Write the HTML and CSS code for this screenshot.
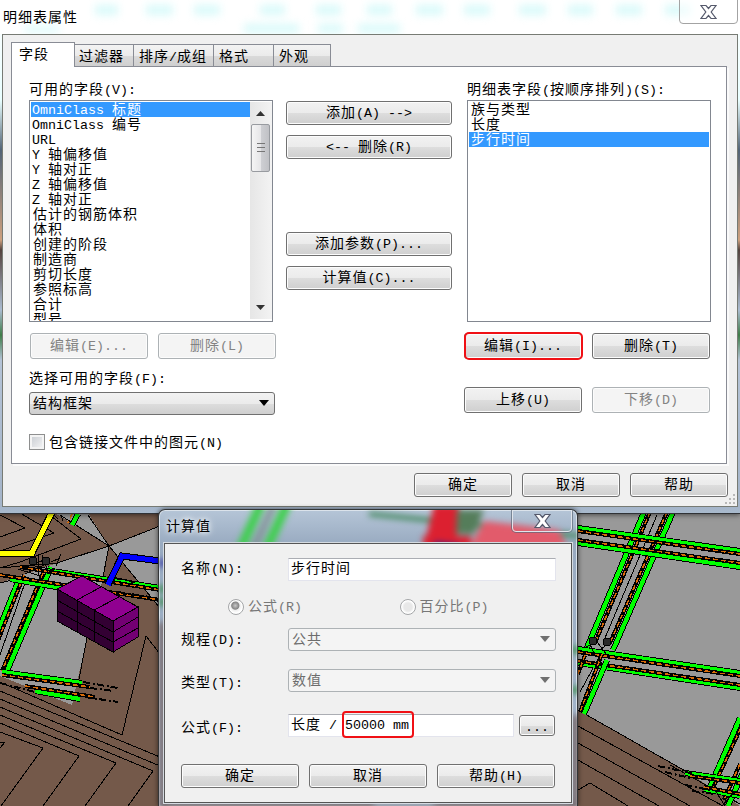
FILE: index.html
```html
<!DOCTYPE html>
<html lang="zh-CN">
<head>
<meta charset="utf-8">
<title>明细表属性</title>
<link rel="stylesheet" href="styles.css">
</head>
<body>
<div class="desktop">
<svg class="model" viewBox="0 0 740 806" width="740" height="806">
  <rect width="740" height="806" fill="#74594a"/>
  <g fill="#999">
    <path d="M578 500H740V806L687 772L583 713L578 710Z"/>
    <path d="M55 513H88L109 546Z"/>
    <path d="M109 546L160 526V608Z"/>
    <path d="M109 546L102 582L87 638L72 705L0 676V583L57 563Z"/>
  </g>
  <g class="thin">
    <path d="M60 515L109 546L160 526M88 515L109 546L102 582M109 546L160 608M109 546L57 563L0 568M87 638L78 684M0 583L24 577"/>
    <path d="M0 515L25 528L0 537M20 513L54 533L0 551M47 513L81 539L20 562L0 568"/>
    <path d="M160 654L146 636L122 735L0 682M0 691L160 757M0 699L160 766M0 707L153 771L128 806M0 715L116 763L85 806M0 723L79 756L43 806M0 732L43 748L1 806M0 742L5 742L0 748"/>
    <path d="M578 710L687 772M578 726L723 806M578 743L690 806M578 760L659 806M578 790L590 783L628 806M670 765L740 804"/>
    <path d="M27 577L0 655M657 515L605 638M603 650L580 692"/>
  </g>
  <!-- left beams -->
  <g>
    <path class="e" d="M20 577L-3 634"/><path class="g" d="M20 577L-3 634"/><path class="k" d="M24 575L-3 643"/><path class="o" d="M24 575L-3 643"/>
    <path class="e" d="M51 567L7 671"/><path class="g" d="M51 567L7 671"/><path class="k" d="M43 573L2 671"/><path class="o" d="M43 573L2 671"/>
    <path class="e" d="M52 571L160 588"/><path class="g" d="M52 571L160 588"/><path class="k" d="M20 567L160 590"/><path class="o" d="M20 567L160 590"/>
    <path class="e" d="M10 579L62 588"/><path class="g" d="M10 579L62 588"/><path class="k" d="M0 575L160 600"/><path class="o" d="M0 575L160 600"/>
    <path class="e" d="M2 672L82 683"/><path class="g" d="M2 672L82 683"/><path class="k" d="M2 675L90 687"/><path class="o" d="M2 675L90 687"/>
    <path class="e" d="M35 691L80 699"/><path class="g" d="M35 691L80 699"/><path class="k" d="M25 686L95 697"/><path class="o" d="M25 686L95 697"/>
    <path class="dash" d="M83 682L118 688M90 688L114 691M85 697L118 702M0 683L35 692M115 578L138 583M118 592L150 597"/>
    <path class="e" d="M78 514L72 525"/><path class="g" d="M78 514L72 525"/><path class="o" d="M72 514L68 523"/>
    <g class="thin"><path d="M22 568L47 559M25 574L48 563M30 565L55 570M38 554V575M42 555L48 572M56 566L61 554M51 562L60 558M18 569L40 576M53 514L58 519M61 515L63 521"/></g>
    <g class="node"><circle cx="33" cy="561" r="4"/><circle cx="46" cy="561" r="4"/></g>
  </g>
  <path class="ye" d="M0 553H32L52 512"/><path class="y" d="M0 553H32L52 512"/>
  <path class="be" d="M108 585L122 556L160 561"/><path class="b" d="M108 585L122 556L160 561"/>
  <!-- stacked block -->
  <g stroke="#000" stroke-width="1">
    <path fill="#900090" d="M57 589L82 576L138 607L113 621Z"/>
    <path fill="#330033" d="M57 589L113 621V652L57 621Z"/>
    <path fill="#730073" d="M113 621L138 607V637L113 652Z"/>
    <path fill="none" d="M57 600L113 632L138 617M57 611L113 642L138 628M77 600V632M94 610V642M77 600L101 587M94 610L119 597"/>
  </g>
  <!-- right beams -->
  <g>
    <path class="e" d="M644 512L586 650"/><path class="g" d="M644 512L586 650"/><path class="k" d="M650 512L595 643"/><path class="o" d="M650 512L595 643"/>
    <path class="e" d="M673 512L613 650"/><path class="g" d="M673 512L613 650"/><path class="k" d="M667 512L610 643"/><path class="o" d="M667 512L610 643"/>
    <path class="e" d="M578 528L740 551"/><path class="g" d="M578 528L740 551"/><path class="k" d="M578 531L740 554"/><path class="o" d="M578 531L740 554"/>
    <path class="e" d="M578 543L740 567"/><path class="g" d="M578 543L740 567"/><path class="k" d="M578 540L740 563"/><path class="o" d="M578 540L740 563"/>
    <path class="e" d="M578 649L740 673"/><path class="g" d="M578 649L740 673"/><path class="k" d="M578 652L740 676"/><path class="o" d="M578 652L740 676"/>
    <path class="e" d="M578 663L740 688"/><path class="g" d="M578 663L740 688"/><path class="k" d="M578 661L740 685"/><path class="o" d="M578 661L740 685"/>
    <path class="e" d="M607 660L584 714"/><path class="g" d="M607 660L584 714"/><path class="k" d="M602 654L580 712"/><path class="o" d="M602 654L580 712"/>
    <path class="k" d="M585 655L578 674"/><path class="o" d="M585 655L578 674"/>
    <path class="e" d="M740 718L710 787"/><path class="g" d="M740 718L710 787"/><path class="k" d="M744 721L713 788"/><path class="o" d="M744 721L713 788"/>
    <path class="e" d="M745 768L728 806"/><path class="g" d="M745 768L728 806"/><path class="k" d="M740 764L724 800"/><path class="o" d="M740 764L724 800"/>
    <path class="e" d="M685 773L740 781"/><path class="g" d="M685 773L740 781"/><path class="k" d="M690 776L740 783"/><path class="o" d="M690 776L740 783"/>
    <path class="e" d="M704 789L740 796"/><path class="g" d="M704 789L740 796"/><path class="k" d="M704 787L740 794"/><path class="o" d="M704 787L740 794"/>
    <path class="dash" d="M658 766L695 774M665 772L690 778M685 785L710 790M692 791L715 794"/>
    <g class="thin"><path d="M584 648L598 641M589 642L595 655M597 642L607 655M600 650L612 641M715 790L725 806M722 806L735 791"/></g>
    <g class="node"><circle cx="593" cy="641" r="4"/><circle cx="607" cy="642" r="4"/></g>
  </g>
</svg>

<section class="window main">
  <header class="caption">
    <svg class="haze" viewBox="0 0 740 34" width="740" height="34"><g fill="#d9fafa">
      <path d="M95 5h23v10H95zM146 5h27v10h-27zM194 5h26v10h-26zM260 5h25v10h-25zM316 5h25v10h-25zM367 5h25v10h-25zM416 5h27v10h-27zM464 5h26v10h-26zM519 5h27v10h-27zM568 5h25v10h-25zM616 5h26v10h-26zM665 5h25v10h-25zM244 24h55v9h-55zM318 24h25v9h-25zM358 24h42v9h-42zM25 26h34v6H25z"/></g></svg>
    <span>明细表属性</span>
    <div class="close"><svg width="17" height="16" viewBox="0 0 17 16"><path d="M1 1.5H6L8.5 4.5L11 1.5H16L11.2 8L16 14.5H11L8.5 11.5L6 14.5H1L5.8 8Z"/></svg></div>
  </header>
  <div class="client">
    <nav class="tabs">
      <div class="tab on">字段</div><div class="tab t2">过滤器</div><div class="tab t3">排序<i>/</i>成组</div><div class="tab t4">格式</div><div class="tab t5">外观</div>
    </nav>
    <div class="page">
      <div class="left">
        <div class="lab">可用的字段<i>(V):</i></div>
        <div class="list">
          <ul>
            <li class="sel"><i>OmniClass </i>标题</li><li><i>OmniClass </i>编号</li><li><i>URL</i></li>
            <li><i>Y </i>轴偏移值</li><li><i>Y </i>轴对正</li><li><i>Z </i>轴偏移值</li><li><i>Z </i>轴对正</li>
            <li>估计的钢筋体积</li><li>体积</li><li>创建的阶段</li><li>制造商</li><li>剪切长度</li><li>参照标高</li><li>合计</li><li>型号</li>
          </ul>
          <div class="scroll">
            <svg width="9" height="5" viewBox="0 0 9 5"><path d="M0 5L4.500 0L9 5Z"/></svg>
            <div class="thumb"></div>
            <svg class="down" width="9" height="5" viewBox="0 0 9 5"><path d="M0 0L4.500 5L9 0Z"/></svg>
          </div>
        </div>
        <div class="pair"><div class="btn off">编辑<i>(E)...</i></div><div class="btn off">删除<i>(L)</i></div></div>
        <div class="lab lab2">选择可用的字段<i>(F):</i></div>
        <div class="combo">结构框架<svg width="10" height="6" viewBox="0 0 10 6"><path d="M0 0H10L5 6Z"/></svg></div>
        <div class="check"><b></b>包含链接文件中的图元<i>(N)</i></div>
      </div>
      <div class="mid">
        <div class="btn">添加<i>(A) --&gt;</i></div><div class="btn"><i>&lt;-- </i>删除<i>(R)</i></div>
        <div class="btn gap">添加参数<i>(P)...</i></div><div class="btn">计算值<i>(C)...</i></div>
      </div>
      <div class="right">
        <div class="lab">明细表字段<i>(</i>按顺序排列<i>)(S):</i></div>
        <div class="list"><ul><li>族与类型</li><li>长度</li><li class="sel">步行时间</li></ul></div>
        <div class="pair"><div class="btn marked">编辑<i>(I)...</i></div><div class="btn">删除<i>(T)</i></div></div>
        <div class="pair move"><div class="btn">上移<i>(U)</i></div><div class="btn off">下移<i>(D)</i></div></div>
      </div>
    </div>
    <footer class="actions"><div class="btn">确定</div><div class="btn">取消</div><div class="btn">帮助</div></footer>
    <svg class="grip" width="12" height="12" viewBox="0 0 12 12"><path d="M9 1h2v2H9zM5 5h2v2H5zM9 5h2v2H9zM1 9h2v2H1zM5 9h2v2H5zM9 9h2v2H9z"/></svg>
  </div>
</section>

<section class="window calc">
  <svg class="glass" viewBox="0 0 420 297" width="420" height="297">
    <g class="blur">
      <path d="M103 -8L80 42M129 -8L106 42" stroke="#3ecf4d" stroke-width="9"/><path d="M116 -8L93 42" stroke="#7b8c8c" stroke-width="5"/>
      <path d="M210 4L290 12L420 26" stroke="#34804d" stroke-width="4"/>
      <path d="M275 -5H300L297 40H264Z" fill="#dc2030"/><path d="M298 0H325L315 24H297Z" fill="#557d5a"/><path d="M264 26L312 26V38H264Z" fill="#dc2030"/>
      <path d="M325 11L400 20L410 42H308Z" fill="#e25b6b"/><path d="M275 34L300 37" stroke="#43208a" stroke-width="5"/>
      <path d="M0 53H8" stroke="#383aa5" stroke-width="7"/><path d="M0 79H8M0 92H8M412 140H420M412 180H420" stroke="#398b49" stroke-width="7"/>
      <path d="M0 112H8V297H0ZM412 205H420V297H412ZM0 292H420V300H0Z" fill="#786b6e"/><path d="M215 293H275" stroke="#a8bbce" stroke-width="6"/>
    </g>
  </svg>
  <header class="caption"><span>计算值</span>
    <div class="close"><svg width="17" height="16" viewBox="0 0 17 16"><path d="M1 1.5H6L8.500 4.500L11 1.500H16L11.200 8L16 14.500H11L8.500 11.500L6 14.500H1L5.800 8Z"/></svg></div>
  </header>
  <div class="client">
    <div class="row r1"><label>名称<i>(N):</i></label><div class="input">步行时间</div></div>
    <div class="radios"><div><b class="dot"></b>公式<i>(R)</i></div><div><b></b>百分比<i>(P)</i></div></div>
    <div class="row r2"><label>规程<i>(D):</i></label><div class="combo off">公共<svg width="10" height="6" viewBox="0 0 10 6"><path d="M0 0H10L5 6Z"/></svg></div></div>
    <div class="row r3"><label>类型<i>(T):</i></label><div class="combo off">数值<svg width="10" height="6" viewBox="0 0 10 6"><path d="M0 0H10L5 6Z"/></svg></div></div>
    <div class="row r4"><label>公式<i>(F):</i></label><div class="input short">长度<i> / </i><span class="hot"><i>50000 mm</i></span></div><div class="btn more"><i>...</i></div></div>
    <footer class="actions"><div class="btn">确定</div><div class="btn">取消</div><div class="btn">帮助<i>(H)</i></div></footer>
  </div>
</section>
</div>
</body>
</html>
```
FILE: styles.css
```css
* { box-sizing: border-box; }
body { margin: 0; font: 14px/15px "Noto Sans CJK SC", sans-serif; letter-spacing: 1px; color: #000; }
i { font: 13.33px/1px "Liberation Mono", monospace; letter-spacing: 0; white-space: pre; }
ul { margin: 0; padding: 0; list-style: none; }
svg { display: block; flex: none; }
.desktop { position: relative; width: 740px; height: 806px; overflow: hidden; }
.model { position: absolute; inset: 0; shape-rendering: crispEdges; }
.thin path { fill: none; stroke: #000; stroke-width: 1; }
.e, .g, .k, .o, .y, .ye, .b, .be, .dash { fill: none; }
.e { stroke: #000; stroke-width: 6; }
.g { stroke: #0f0; stroke-width: 4.2; }
.k { stroke: #000; stroke-width: 4; }
.o { stroke: #d96b08; stroke-width: 1.5; stroke-dasharray: 5 3; }
.dash { stroke: #000; stroke-width: 2; stroke-dasharray: 7 3 2 2; }
.ye { stroke: #000; stroke-width: 7; }
.y { stroke: #ff0; stroke-width: 5; }
.be { stroke: #000; stroke-width: 7; }
.b { stroke: #00f; stroke-width: 5; }
.node { fill: #2a2a2a; stroke: #000; }

.window { position: absolute; }
.main {
  left: 0; top: 0; width: 740px; height: 514px; padding: 0 2px 7px;
  background: linear-gradient(#fff 0, #e9ffff 100px, #526477 150px, #cda07e 240px, #54433e 250px, #aabbd0 310px, #3e7c48 335px, #b4c3d6 360px, #a4b4c9 506px, #a9bacd);
  border-bottom: 1px solid #303236; box-shadow: 0 1px 5px #0008;
}
.caption { position: relative; display: flex; }
.caption > span { position: relative; }
.main .caption { height: 34px; margin: 0 -2px; padding: 9px 0 0 3px; background: #fff; }
.haze { position: absolute; left: 0; top: 0; filter: blur(4px); }
.close { position: absolute; top: -4px; display: flex; justify-content: center; }
.main .close { right: 2px; width: 59px; height: 28px; padding-top: 7px; border: 1px solid #a3a3a3; border-radius: 4px; background: #fff8; }
.close path { fill: #fff; stroke: #55596b; stroke-width: 1.2; }
.main .client { position: relative; width: 736px; height: 473px; padding: 8px 9px 0; background: #f0f0f0; border: 1px solid #777b74; }
.tabs { display: flex; align-items: flex-end; height: 24px; position: relative; margin-bottom: -1px; margin-left: -1px; }
.tab { height: 23px; padding: 3px 0 0 4px; border: 1px solid #898c95; margin-left: -1px; background: linear-gradient(#f3f3f3, #ebebeb 50%, #dadada 51%, #cfcfcf); white-space: nowrap; }
.tab.on { width: 64px; height: 25px; padding: 3px 0 0 7px; background: #fff; border-bottom: 0; margin-left: 0; }
.t2 { width: 60px; } .t3 { width: 81px; padding-left: 5px; } .t4 { width: 61px; padding-left: 5px; } .t5 { width: 58px; padding-left: 5px; }
.page { display: flex; width: 716px; height: 398px; margin-left: -1px; padding: 15px 15px 0 17px; background: #fff; border: 1px solid #898c95; box-shadow: 2px 2px #fafafa; }
.lab { height: 18px; line-height: 12px; white-space: nowrap; }
.left { width: 247px; }
.mid { width: 166px; margin: 19px 0 0 10px; }
.right { width: 247px; margin-left: 12px; }
.list { display: flex; width: 244px; height: 222px; border: 1px solid #828790; padding: 1px; overflow: hidden; }
.left .list { padding-right: 0; }
.list ul { flex: 1; }
.list li { height: 15px; padding-left: 2px; white-space: nowrap; line-height: 13px; }
.list li i { margin-left: -1px; }
.sel { background: #3399ff; color: #fff; }
.right .list, .right .lab { margin-left: 3px; }
.scroll { width: 22px; margin: 0 0 1px; padding: 9px 1px 0; background: linear-gradient(90deg, #e6e6e6, #f3f3f3); }
.scroll svg { margin-left: 5px; fill: #333; }
.thumb { width: 19px; height: 48px; margin: 8px 0 133px; border: 1px solid #989ba0; border-radius: 2px; background: linear-gradient(#777, #777) 5px 18px / 8px 1px no-repeat, linear-gradient(#777, #777) 5px 22px / 8px 1px no-repeat, linear-gradient(#777, #777) 5px 26px / 8px 1px no-repeat, linear-gradient(90deg, #f5f5f5, #e6e6e8 50%, #cfd0d4 51%, #c0c1c5); }
.btn { height: 24px; line-height: 19px; text-align: center; border: 1px solid #707070; border-radius: 3px; background: linear-gradient(#f2f2f2, #ebebeb 50%, #dddddd 51%, #cfcfcf); box-shadow: inset 0 0 0 1px #fcfcfc; white-space: nowrap; }
.btn.off { color: #838383; border-color: #adb2b5; background: #f4f4f4; }
.mid .btn { margin-bottom: 10px; }
.mid .gap { margin-top: 73px; }
.pair { display: flex; gap: 10px; margin: 11px 0 0 1px; }
.pair .btn { width: 118px; height: 26px; line-height: 21px; }
.right .pair { margin-left: 0; }
.right .move { margin-top: 28px; }
.btn.marked { position: relative; }
.marked::after { content: ""; position: absolute; inset: -2px -2px -2px -1px; border: 2px solid #f01015; border-radius: 5px; }
.lab2 { margin-top: 12px; height: 21px; }
.combo { display: flex; align-items: center; justify-content: space-between; width: 246px; height: 23px; padding: 0 5px 2px 3px; border: 1px solid #707070; border-radius: 3px; background: linear-gradient(#f2f2f2, #ebebeb 50%, #dddddd 51%, #cfcfcf); }
.combo.off { width: 268px; color: #6d6d6d; background: #f4f4f4; border-color: #adb2b5; }
.combo.off path { fill: #707070; }
.check { height: 16px; margin-top: 19px; line-height: 14px; white-space: nowrap; }
.check b { display: inline-block; vertical-align: top; width: 16px; height: 16px; margin-right: 4px; border: 1px solid #8e8f8f; background: linear-gradient(135deg, #c6cad0, #f7f7f7); box-shadow: inset 0 0 0 2px #f4f4f4; }
.actions { display: flex; gap: 10px; }
.main .actions { margin: 9px 0 0 402px; }
.main .actions .btn { width: 98px; }
.grip { position: absolute; right: 1px; bottom: 1px; fill: #b8b8b8; }

.calc { left: 158px; top: 509px; width: 420px; height: 297px; border: 1px solid #343638; border-bottom: 0; border-radius: 7px 7px 0 0; background: linear-gradient(#b5c5d7, #98aac0 35px, #a8bacf); box-shadow: inset 0 0 0 1px #dbe3eb, 0 0 5px #0009; overflow: hidden; }
.glass { position: absolute; inset: 0; fill: none; }
.blur { filter: blur(3px); }
.calc .caption { height: 33px; padding: 8px 0 0 7px; text-shadow: 0 0 5px #fff, 0 0 9px #fff; }
.calc .close { right: 5px; width: 60px; height: 26px; padding-top: 6px; border: 1px solid #e0e5ec; border-radius: 4px; box-shadow: 0 0 0 1px #5a6675aa; }
.calc .client { position: relative; width: 408px; height: 260px; margin-left: 5px; padding: 14px 0 0 16px; background: #f0f0f0; border: 1px solid #555; box-shadow: 0 0 0 1px #d5dbe1; }
.row { display: flex; align-items: flex-start; height: 23px; }
.row label { width: 107px; padding-top: 2px; white-space: nowrap; }
.input { width: 268px; height: 23px; padding: 1px 2px; background: #fff; border: 1px solid #e3e4ed; border-top-color: #abadb3; white-space: nowrap; }
.radios { display: flex; height: 16px; margin: 18px 0 13px 47px; color: #777; line-height: 13px; }
.radios div { width: 172px; white-space: nowrap; }
.radios b { display: inline-block; vertical-align: top; width: 16px; height: 16px; margin-right: 4px; border: 1px solid #a4a6a8; border-radius: 50%; background: radial-gradient(#e8e8e8 40%, #fff 65%); box-shadow: inset 0 0 0 1px #fff; }
.radios .dot { background: radial-gradient(circle at 45% 40%, #c8c8c8 0, #858585 32%, #eee 40%, #fff 65%); }
.r2 label { padding-top: 3px; }
.r3 label { padding-top: 5px; }
.r3 { margin-top: 18px; }
.r4 { margin-top: 22px; }
.r4 label { padding-top: 5px; }
.short { width: 226px; position: relative; }
.hot { position: relative; }
.hot::after { content: ""; position: absolute; left: -3px; right: -5px; top: -2px; height: 23px; border: 2px solid #f01015; border-radius: 4px; }
.more { width: 36px; height: 21px; margin: 1px 0 0 5px; }
.calc .actions { margin-top: 27px; }
.calc .actions .btn { width: 118px; }
```
